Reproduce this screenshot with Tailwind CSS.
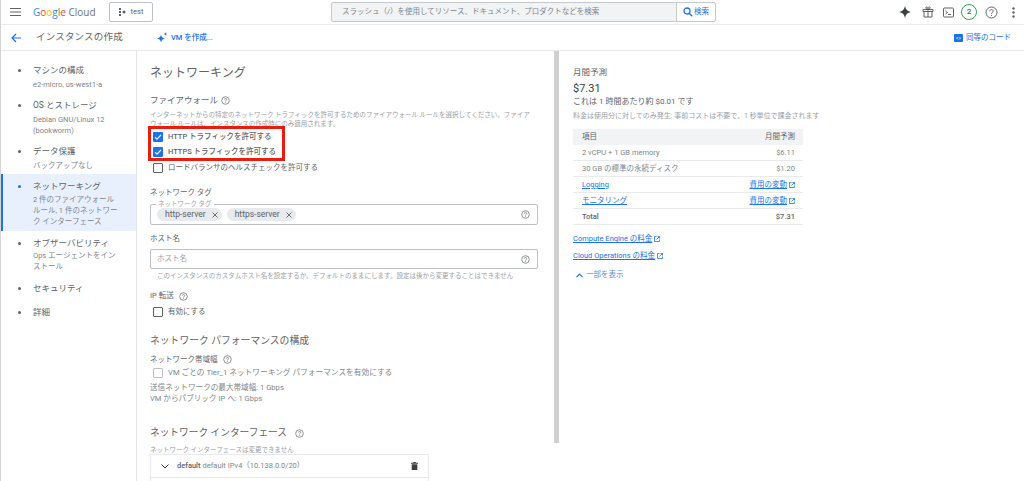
<!DOCTYPE html>
<html lang="ja">
<head>
<meta charset="UTF-8" />
<meta name="viewport" content="width=device-width, initial-scale=1.0" />
<title>インスタンスの作成</title>
<script src="https://cdn.jsdelivr.net/npm/@tailwindcss/browser@4"></script>
</head>
<body class="bg-white overflow-hidden font-['Roboto','Noto_Sans_CJK_JP',sans-serif] text-[#5f6368]">
<div class="relative w-[1024px] h-[481px] overflow-hidden flex flex-col border-l border-[#d4d4d4]">

    <!-- top bar -->
    <header class="h-[25px] shrink-0 flex items-center border-b border-[#ececec] pl-[9px] pr-[9px]">
        <svg class="w-[12px] h-[12px]" viewBox="0 0 12 12" fill="#5f6368"><rect x="0" y="2" width="11" height="1"/><rect x="0" y="5.5" width="11" height="1"/><rect x="0" y="9" width="11" height="1"/></svg>
        <div class="ml-[11px] w-[64px] text-[10px] leading-none whitespace-nowrap font-['Open_Sans',sans-serif]"><span class="text-[#4285f4]">G</span><span class="text-[#ea4335]">o</span><span class="text-[#fbbc05]">o</span><span class="text-[#4285f4]">g</span><span class="text-[#34a853]">l</span><span class="text-[#ea4335]">e</span> <span class="text-[#70757a]">Cloud</span></div>
        <div class="ml-[12px] w-[44px] h-[20px] border border-[#bdc1c6] rounded-[2px] flex items-center justify-center gap-[5px] text-[7.5px] text-[#5f6368]">
            <svg class="w-[7px] h-[8px]" viewBox="0 0 7 8" fill="#5f6368"><rect x="0" y="0" width="2" height="2"/><rect x="0" y="3" width="2" height="2"/><rect x="0" y="6" width="2" height="2"/><rect x="3.5" y="2.5" width="3" height="3" rx="1.5"/></svg>
            test
        </div>
        <div class="ml-[178px] w-[385px] h-[20px] border border-[#c4c7cb] rounded-[2px] flex text-[7.5px]">
            <div class="flex-1 bg-[#f1f3f4] flex items-center pl-[10px] text-[#80868b]">スラッシュ（/）を使用してリソース、ドキュメント、プロダクトなどを検索</div>
            <div class="w-[39px] border-l border-[#c4c7cb] flex items-center justify-center gap-[1px] text-[#1a73e8]">
                <svg class="w-[10px] h-[10px]" viewBox="0 0 10 10" fill="none" stroke="#1a73e8" stroke-width="1.3"><circle cx="4" cy="4" r="3"/><path d="M6.2 6.2 9.3 9.3"/></svg>
                検索
            </div>
        </div>
        <div class="ml-auto flex items-center">
            <svg class="w-[12px] h-[12px]" viewBox="0 0 12 12" fill="#3c4043"><path d="M6 0C6.6 3.6 8.4 5.4 12 6 8.4 6.6 6.600 8.400 6 12 5.400 8.400 3.600 6.600 0 6 3.600 5.400 5.400 3.600 6 0Z"/></svg>
            <svg class="w-[12px] h-[12px] ml-[11px]" viewBox="0 0 12 12" fill="none" stroke="#5f6368" stroke-width="1"><path d="M1 3.500h10v2H1zM2 5.500v5.500h8V5.500M6 3.500V11M6 3.500C4 3.500 3 1 4.500 1S6 3.500 6 3.500ZM6 3.500C8 3.500 9 1 7.500 1S6 3.500 6 3.500Z"/></svg>
            <svg class="w-[11px] h-[11px] ml-[9px]" viewBox="0 0 11 11" fill="none" stroke="#5f6368" stroke-width="1"><rect x="0.500" y="1" width="10" height="9" rx="1"/><path d="M2.500 4 4.500 5.500 2.500 7M5 7.500h3"/></svg>
            <div class="ml-[7px] w-[16px] h-[16px] rounded-full border-[1.5px] border-[#34a853] flex items-center justify-center text-[8px] font-medium text-[#188038]">2</div>
            <svg class="w-[13px] h-[13px] ml-[8px]" viewBox="0 0 13 13" fill="none" stroke="#5f6368" stroke-width="1"><circle cx="6.500" cy="6.500" r="5.500"/><path d="M4.800 5.200C4.800 3 8.200 3 8.200 5.200 8.200 6.500 6.500 6.400 6.500 8"/><path d="M6.500 9v1"/></svg>
            <svg class="w-[3px] h-[11px] ml-[14px]" viewBox="0 0 3 11" fill="#5f6368"><circle cx="1.500" cy="1.500" r="1.200"/><circle cx="1.500" cy="5.500" r="1.200"/><circle cx="1.500" cy="9.500" r="1.200"/></svg>
        </div>
    </header>

    <!-- page title bar -->
    <div class="h-[26px] shrink-0 flex items-center border-b border-[#e8eaed] pl-[10px] pr-[13px]">
        <svg class="w-[10px] h-[10px]" viewBox="0 0 10 10" fill="none" stroke="#1a73e8" stroke-width="1.200"><path d="M10 5H1M5 1 1 5l4 4"/></svg>
        <div class="ml-[15px] text-[9.5px] text-[#5f6368] tracking-[0.2px]">インスタンスの作成</div>
        <svg class="ml-[34px] w-[11px] h-[11px]" viewBox="0 0 11 11" fill="#1a73e8"><path d="M4 2.500C4.400 5 5.500 6.100 8 6.500 5.500 6.900 4.400 8 4 10.500 3.600 8 2.500 6.900 0 6.500 2.500 6.100 3.600 5 4 2.500Z"/><path d="M8.500 0C8.700 1.300 9.200 1.800 10.500 2 9.200 2.200 8.700 2.700 8.500 4 8.300 2.700 7.800 2.200 6.500 2 7.800 1.800 8.300 1.300 8.500 0Z"/></svg>
        <div class="ml-[3px] text-[7.5px] text-[#1a73e8] font-medium">VM を作成...</div>
        <div class="ml-auto flex items-center gap-[3px] text-[7.5px] text-[#1a73e8]">
            <div class="w-[9px] h-[8px] rounded-[1px] bg-[#1a73e8] text-white text-[5px] leading-[8px] text-center">&lt;&gt;</div>
            同等のコード
        </div>
    </div>

    <div class="flex-1 flex min-h-0">
        <!-- left nav -->
        <nav class="w-[136px] shrink-0 border-r border-[#e3e5e8] pt-[14px] text-[7.5px] leading-[11px] text-[#80868b]">
            <div class="flex h-[35px] pl-[17px]">
                <span class="mt-[4px] w-[3px] h-[3px] rounded-full bg-[#5f6368]"></span>
                <div class="ml-[12px]"><div class="text-[8.500px] text-[#5f6368] h-[14px]">マシンの構成</div>e2-micro, us-west1-a</div>
            </div>
            <div class="flex h-[46px] pl-[17px]">
                <span class="mt-[4px] w-[3px] h-[3px] rounded-full bg-[#5f6368]"></span>
                <div class="ml-[12px]"><div class="text-[8.500px] text-[#5f6368] h-[14px]">OS とストレージ</div>Debian GNU/Linux 12<br>(bookworm)</div>
            </div>
            <div class="flex h-[24px] pl-[17px]">
                <span class="mt-[4px] w-[3px] h-[3px] rounded-full bg-[#5f6368]"></span>
                <div class="ml-[12px]"><div class="text-[8.500px] text-[#5f6368] h-[14px]">データ保護</div>バックアップなし</div>
            </div>
            <div class="flex h-[57px] mt-[4px] pl-[15px] pt-[7px] bg-[#e8f0fe] border-l-2 border-[#1a73e8]">
                <span class="mt-[4px] w-[3px] h-[3px] rounded-full bg-[#1a73e8]"></span>
                <div class="ml-[12px]"><div class="text-[8.500px] text-[#5f6368] h-[13px]">ネットワーキング</div>2 件のファイアウォール<br>ルール, 1 件のネットワー<br>ク インターフェース</div>
            </div>
            <div class="flex h-[45px] mt-[7px] pl-[17px]">
                <span class="mt-[4px] w-[3px] h-[3px] rounded-full bg-[#5f6368]"></span>
                <div class="ml-[12px]"><div class="text-[8.500px] text-[#5f6368] h-[12px]">オブザーバビリティ</div>Ops エージェントをイン<br>ストール</div>
            </div>
            <div class="flex h-[24px] pl-[17px]">
                <span class="mt-[4px] w-[3px] h-[3px] rounded-full bg-[#5f6368]"></span>
                <div class="ml-[12px] text-[8.500px] text-[#5f6368]">セキュリティ</div>
            </div>
            <div class="flex h-[24px] pl-[17px]">
                <span class="mt-[4px] w-[3px] h-[3px] rounded-full bg-[#5f6368]"></span>
                <div class="ml-[12px] text-[8.500px] text-[#5f6368]">詳細</div>
            </div>
        </nav>

        <!-- form -->
        <main class="relative w-[417px] shrink-0 pl-[13px] pr-[16px] pt-[13px] text-[7.500px] overflow-hidden">
            <h2 class="text-[12px] leading-[18px] text-[#5f6368]">ネットワーキング</h2>

            <div class="mt-[12px] h-[12px] flex items-center gap-[3px] text-[8.500px] text-[#5f6368]">ファイアウォール
                <svg class="w-[9px] h-[9px]" viewBox="0 0 13 13" fill="none" stroke="#5f6368" stroke-width="1"><circle cx="6.500" cy="6.500" r="5.500"/><path d="M4.800 5.200C4.800 3 8.200 3 8.200 5.200 8.200 6.500 6.500 6.400 6.500 8"/><path d="M6.500 9v1"/></svg>
            </div>
            <p class="mt-[5px] text-[6.500px] leading-[9px] text-[#9aa0a6] whitespace-nowrap">インターネットからの特定のネットワーク トラフィックを許可するためのファイアウォール ルールを選択してください。ファイア<br>ウォール ルールは、インスタンスの作成時にのみ適用されます。</p>

            <div class="h-[15px] flex items-center text-[7.500px] font-medium text-[#5f6368]">
                <span class="ml-[3px] w-[10px] h-[10px] rounded-[1px] bg-[#1a73e8] flex items-center justify-center"><svg class="w-[8px] h-[8px]" viewBox="0 0 8 8" fill="none" stroke="white" stroke-width="1.200"><path d="M1 4.200 3 6.200 7 1.800"/></svg></span>
                <span class="ml-[5px]">HTTP トラフィックを許可する</span>
            </div>
            <div class="h-[16px] flex items-center text-[7.500px] font-medium text-[#5f6368]">
                <span class="ml-[3px] w-[10px] h-[10px] rounded-[1px] bg-[#1a73e8] flex items-center justify-center"><svg class="w-[8px] h-[8px]" viewBox="0 0 8 8" fill="none" stroke="white" stroke-width="1.200"><path d="M1 4.200 3 6.200 7 1.800"/></svg></span>
                <span class="ml-[5px]">HTTPS トラフィックを許可する</span>
            </div>
            <div class="h-[16px] flex items-center text-[7.500px] text-[#5f6368]">
                <span class="ml-[3px] w-[10px] h-[10px] rounded-[1px] border border-[#5f6368]"></span>
                <span class="ml-[5px]">ロードバランサのヘルスチェックを許可する</span>
            </div>

            <div class="mt-[11px] h-[12px] flex items-center text-[7.500px] text-[#5f6368]">ネットワーク タグ</div>
            <div class="relative mt-[5px] w-[388px] h-[21px] border border-[#bdc1c6] rounded-[2px] flex items-center pl-[6px] pr-[7px] gap-[5px]">
                <span class="absolute -top-[5px] left-[5px] bg-white px-[2px] text-[6.500px] leading-[8px] text-[#9aa0a6]">ネットワーク タグ</span>
                <span class="h-[13px] pl-[8px] pr-[4px] rounded-full bg-[#e8eaed] flex items-center gap-[6px] text-[8.500px] text-[#5f6368]">http-server<svg class="w-[6px] h-[6px]" viewBox="0 0 6 6" stroke="#5f6368" stroke-width="0.900"><path d="M.5.500l5 5M5.500.500l-5 5"/></svg></span>
                <span class="h-[13px] pl-[8px] pr-[4px] rounded-full bg-[#e8eaed] flex items-center gap-[6px] text-[8.500px] text-[#5f6368]">https-server<svg class="w-[6px] h-[6px]" viewBox="0 0 6 6" stroke="#5f6368" stroke-width="0.900"><path d="M.5.500l5 5M5.500.500l-5 5"/></svg></span>
                <svg class="ml-auto w-[9px] h-[9px]" viewBox="0 0 13 13" fill="none" stroke="#5f6368" stroke-width="1"><circle cx="6.500" cy="6.500" r="5.500"/><path d="M4.800 5.200C4.800 3 8.200 3 8.200 5.200 8.200 6.500 6.500 6.400 6.500 8"/><path d="M6.500 9v1"/></svg>
            </div>

            <div class="mt-[8px] h-[12px] flex items-center text-[7.500px] text-[#5f6368]">ホスト名</div>
            <div class="mt-[4px] w-[388px] h-[20px] border border-[#bdc1c6] rounded-[2px] flex items-center pl-[6px] pr-[7px] text-[7.500px] text-[#9aa0a6]">ホスト名
                <svg class="ml-auto w-[9px] h-[9px]" viewBox="0 0 13 13" fill="none" stroke="#5f6368" stroke-width="1"><circle cx="6.500" cy="6.500" r="5.500"/><path d="M4.800 5.200C4.800 3 8.200 3 8.200 5.200 8.200 6.500 6.500 6.400 6.500 8"/><path d="M6.500 9v1"/></svg>
            </div>
            <p class="mt-[2px] pl-[7px] text-[6.500px] leading-[10px] text-[#9aa0a6] whitespace-nowrap">このインスタンスのカスタムホスト名を設定するか、デフォルトのままにします。設定は後から変更することはできません</p>

            <div class="mt-[9px] h-[12px] flex items-center gap-[5px] text-[7.500px] text-[#5f6368]">IP 転送
                <svg class="w-[9px] h-[9px]" viewBox="0 0 13 13" fill="none" stroke="#5f6368" stroke-width="1"><circle cx="6.500" cy="6.500" r="5.500"/><path d="M4.800 5.200C4.800 3 8.200 3 8.200 5.200 8.200 6.500 6.500 6.400 6.500 8"/><path d="M6.500 9v1"/></svg>
            </div>
            <div class="mt-[2px] h-[16px] flex items-center text-[7.500px] text-[#5f6368]">
                <span class="ml-[3px] w-[10px] h-[10px] rounded-[1px] border border-[#5f6368]"></span>
                <span class="ml-[5px]">有効にする</span>
            </div>

            <h3 class="mt-[13px] h-[16px] leading-[16px] text-[9.800px] text-[#5f6368]">ネットワーク パフォーマンスの構成</h3>
            <div class="mt-[5px] h-[11px] flex items-center gap-[5px] text-[7.500px] text-[#5f6368]">ネットワーク帯域幅
                <svg class="w-[9px] h-[9px]" viewBox="0 0 13 13" fill="none" stroke="#5f6368" stroke-width="1"><circle cx="6.500" cy="6.500" r="5.500"/><path d="M4.800 5.200C4.800 3 8.200 3 8.200 5.200 8.200 6.500 6.500 6.400 6.500 8"/><path d="M6.500 9v1"/></svg>
            </div>
            <div class="h-[16px] flex items-center text-[7.700px] text-[#80868b]">
                <span class="ml-[3px] w-[10px] h-[10px] rounded-[1px] border border-[#bdc1c6]"></span>
                <span class="ml-[5px]">VM ごとの Tier_1 ネットワーキング パフォーマンスを有効にする</span>
            </div>
            <p class="mt-[1px] text-[7.600px] leading-[11px] text-[#80868b]">送信ネットワークの最大帯域幅: 1 Gbps<br>VM からパブリック IP へ: 1 Gbps</p>

            <div class="mt-[21px] h-[16px] flex items-center gap-[8px] text-[9.700px] text-[#5f6368]">ネットワーク インターフェース
                <svg class="w-[9px] h-[9px]" viewBox="0 0 13 13" fill="none" stroke="#5f6368" stroke-width="1"><circle cx="6.500" cy="6.500" r="5.500"/><path d="M4.800 5.200C4.800 3 8.200 3 8.200 5.200 8.200 6.500 6.500 6.400 6.500 8"/><path d="M6.500 9v1"/></svg>
            </div>
            <p class="mt-[5px] text-[6.500px] leading-[8px] text-[#9aa0a6]">ネットワーク インターフェースは変更できません</p>
            <div class="w-[279px] h-[60px] border border-[#e8eaed]">
                <div class="h-[23px] border-b border-[#e8eaed] flex items-center pl-[10px] pr-[10px] text-[7.500px] text-[#80868b]">
                    <svg class="w-[8px] h-[5px]" viewBox="0 0 8 5" fill="none" stroke="#3c4043" stroke-width="1"><path d="M.5.500 4 4 7.500.500"/></svg>
                    <span class="ml-[8px] font-medium text-[#5f6368]">default</span>
                    <span class="ml-[2px]">default IPv4（10.138.0.0/20）</span>
                    <svg class="ml-auto w-[7px] h-[8px]" viewBox="0 0 7 8" fill="#3c4043"><path d="M2.500 0h2l.5.700H7v1H0v-1h2ZM.7 2.200h5.600V8H.7Z"/></svg>
                </div>
            </div>
        </main>

        <!-- scrollbar gutter -->
        <div class="w-[5px] shrink-0 h-[392px] bg-[#d0d0d0]"></div>

        <!-- cost panel -->
        <aside class="w-[246px] shrink-0 pl-[14px] pt-[15px] text-[7.500px] text-[#5f6368]">
            <div class="h-[13px] leading-[13px] text-[8.500px]">月間予測</div>
            <div class="mt-[3px] h-[13px] leading-[14px] text-[11px] text-[#3c4043]">$7.31</div>
            <div class="h-[13px] leading-[13px] text-[8px]">これは 1 時間あたり約 $0.01 です</div>
            <div class="mt-[2px] h-[13px] leading-[13px] text-[7px] text-[#9aa0a6] whitespace-nowrap">料金は使用分に対してのみ発生: 事前コストは不要で、1 秒単位で課金されます</div>

            <div class="mt-[6px] w-[230px] text-[7.500px]">
                <div class="h-[16px] bg-[#f1f3f4] flex items-center justify-between pl-[9px] pr-[8px]"><span>項目</span><span>月間予測</span></div>
                <div class="h-[16px] border-b border-[#e8eaed] flex items-center justify-between pl-[9px] pr-[8px] text-[#80868b]"><span>2 vCPU + 1 GB memory</span><span>$6.11</span></div>
                <div class="h-[16px] border-b border-[#e8eaed] flex items-center justify-between pl-[9px] pr-[8px] text-[#80868b]"><span>30 GB の標準の永続ディスク</span><span>$1.20</span></div>
                <div class="h-[16px] border-b border-[#e8eaed] flex items-center justify-between pl-[9px] pr-[8px] text-[#1a73e8]"><span class="underline">Logging</span><span class="flex items-center gap-[2px]"><span class="underline">費用の変動</span><svg class="w-[6px] h-[6px]" viewBox="0 0 6 6" fill="none" stroke="#1a73e8" stroke-width=".8"><path d="M2.500.500H.5v5h5v-2M3.500.500h2v2M5.500.500 2.500 3.500"/></svg></span></div>
                <div class="h-[16px] border-b border-[#e8eaed] flex items-center justify-between pl-[9px] pr-[8px] text-[#1a73e8]"><span class="underline">モニタリング</span><span class="flex items-center gap-[2px]"><span class="underline">費用の変動</span><svg class="w-[6px] h-[6px]" viewBox="0 0 6 6" fill="none" stroke="#1a73e8" stroke-width=".8"><path d="M2.500.500H.5v5h5v-2M3.500.500h2v2M5.500.500 2.500 3.500"/></svg></span></div>
                <div class="h-[16px] border-b border-[#e8eaed] flex items-center justify-between pl-[9px] pr-[8px] font-medium"><span>Total</span><span>$7.31</span></div>
            </div>

            <div class="mt-[8px] h-[12px] flex items-center gap-[2px] text-[#1a73e8]"><span class="underline">Compute Engine の料金</span><svg class="w-[6px] h-[6px]" viewBox="0 0 6 6" fill="none" stroke="#1a73e8" stroke-width=".8"><path d="M2.500.500H.5v5h5v-2M3.500.500h2v2M5.500.500 2.500 3.500"/></svg></div>
            <div class="mt-[5px] h-[12px] flex items-center gap-[2px] text-[#1a73e8]"><span class="underline">Cloud Operations の料金</span><svg class="w-[6px] h-[6px]" viewBox="0 0 6 6" fill="none" stroke="#1a73e8" stroke-width=".8"><path d="M2.500.500H.5v5h5v-2M3.500.500h2v2M5.500.500 2.500 3.500"/></svg></div>
            <div class="mt-[7px] h-[12px] flex items-center gap-[3px] pl-[3px] text-[#5f8fd9]"><svg class="w-[7px] h-[5px]" viewBox="0 0 7 5" fill="none" stroke="#1a73e8" stroke-width="1.100"><path d="M.5 4.200 3.500 1l3 3.200"/></svg>一部を表示</div>
        </aside>
    </div>

    <!-- red annotation box over the two checkboxes -->
    <div class="absolute left-[147px] top-[126px] w-[137px] h-[35px] border-[3px] border-[#ea1c0d]"></div>
</div>
</body>
</html>
